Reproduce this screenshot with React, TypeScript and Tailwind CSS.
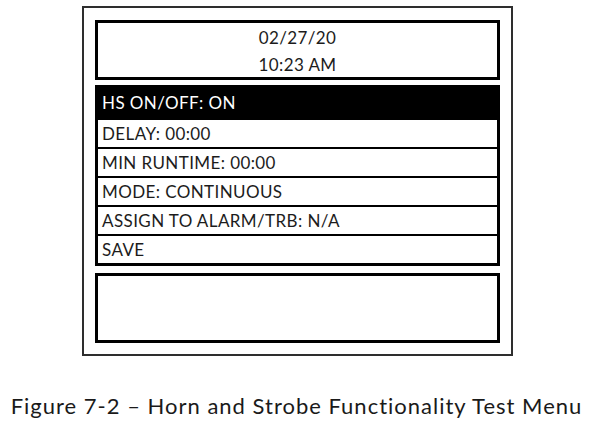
const ROWS = ["DELAY: 00:00", "MIN RUNTIME: 00:00", "MODE: CONTINUOUS", "ASSIGN TO ALARM/TRB: N/A", "SAVE"];

export default function App() {
  return (
    <div className="relative h-[429px] w-[593px] overflow-hidden bg-white pt-[6px] font-['Lato',sans-serif] text-[#1c1c1c]">
      <div className="ml-[82px] flex h-[350px] w-[431px] flex-col border-2 border-[#2e2e2e] px-[11px] pt-[12px]">
        <div className="flex h-[60px] flex-col items-center justify-center border-[3px] border-black pt-[2px] text-[17px] leading-[27px] tracking-[0.4px]">
          <span>02/27/20</span>
          <span>10:23 AM</span>
        </div>

        <div className="mt-[5px] flex flex-col border-x-[3px] border-b-[3px] border-black text-[17px] tracking-[0.4px]">
          <div className="flex h-[33px] items-center bg-black pl-[4px] pt-[3px] text-white">HS ON/OFF: ON</div>
          {ROWS.map((r) => (
            <div key={r} className="flex h-[29px] items-center border-t-2 border-black pl-[4px] pt-[1px]">
              {r}
            </div>
          ))}
        </div>

        <div className="mt-[7px] h-[70px] border-[3px] border-black" />
      </div>

      <p className="mt-[35px] text-center text-[22px] leading-[30px] tracking-[1px] text-[#1a1a1a]">
        Figure 7-2 – Horn and Strobe Functionality Test Menu
      </p>
    </div>
  );
}
